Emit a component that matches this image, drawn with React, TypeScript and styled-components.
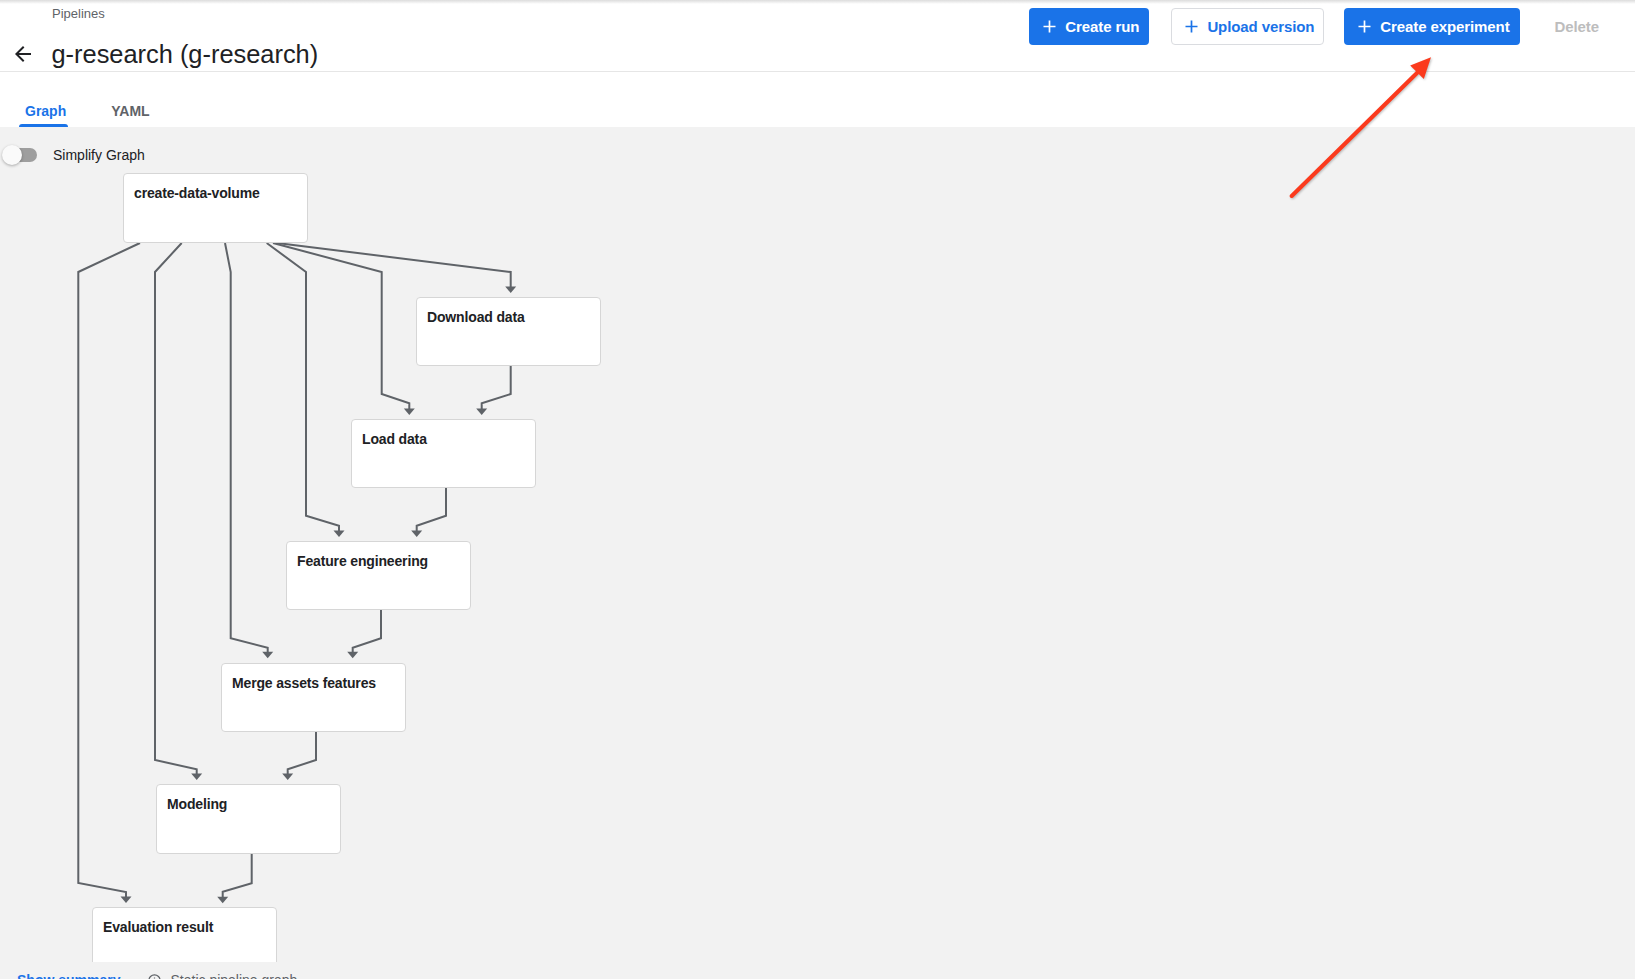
import React from 'react';
import styled, { createGlobalStyle } from 'styled-components';

const CANVAS_TOP = 127;

const GlobalStyle = createGlobalStyle`
  html, body { margin: 0; padding: 0; background: #fff; overflow: hidden; }
  * { box-sizing: border-box; }
  body { font-family: "Liberation Sans", Arial, Helvetica, sans-serif; }
`;

const Page = styled.div`
  position: relative;
  width: 100%;
  height: 100vh;
  overflow: hidden;
  display: flex;
  flex-direction: column;
`;

const Header = styled.header`
  flex: none;
  height: 72px;
  border-bottom: 1px solid #e6e6e6;
  background: linear-gradient(#dcdcdc 0px, #ffffff 4px);
  display: flex;
  justify-content: space-between;
  align-items: flex-start;
`;

const TitleBlock = styled.div`
  padding: 6px 0 0 11px;
`;

const Breadcrumb = styled.div`
  padding-left: 41px;
  font-size: 13px;
  line-height: 15px;
  color: #5f6368;
`;

const TitleRow = styled.div`
  margin-top: 18px;
  height: 30px;
  display: flex;
  align-items: center;
  gap: 16.5px;
`;

const Title = styled.h1`
  margin: 0;
  font-size: 25.4px;
  font-weight: 400;
  line-height: 30px;
  color: #202124;
`;

const Actions = styled.div`
  display: flex;
  align-items: center;
  gap: 20px;
  padding: 8px 21px 0 0;
`;

const Button = styled.button<{ $variant: 'primary' | 'outline' | 'text' }>`
  height: 37px;
  display: inline-flex;
  align-items: center;
  gap: 9px;
  padding: ${p => (p.$variant === 'text' ? '0 14px' : '0 9px 0 13px')};
  border-radius: 4px;
  font-family: "Liberation Sans", Arial, sans-serif;
  font-size: 15px;
  font-weight: 700;
  letter-spacing: -0.1px;
  cursor: pointer;
  border: 1px solid ${p => (p.$variant === 'outline' ? '#dadce0' : 'transparent')};
  background: ${p => (p.$variant === 'primary' ? '#1a73e8' : 'transparent')};
  color: ${p => (p.$variant === 'primary' ? '#ffffff' : p.$variant === 'outline' ? '#1a73e8' : '#bdbdbd')};
  &:first-child {
    margin-right: 2px;
  }
`;

const TabBar = styled.div`
  flex: none;
  height: 55px;
  padding: 31px 0 0 19px;
  display: flex;
  gap: 37px;
  background: #fff;
`;

const Tab = styled.div<{ $active?: boolean }>`
  position: relative;
  height: 24px;
  padding: 0 2px 0 6px;
  font-size: 14px;
  font-weight: 700;
  line-height: 16px;
  color: ${p => (p.$active ? '#1a73e8' : '#5f6368')};
  &::after {
    content: '';
    display: ${p => (p.$active ? 'block' : 'none')};
    position: absolute;
    left: 0;
    right: 0;
    bottom: 0;
    height: 3px;
    border-radius: 3px 3px 0 0;
    background: #1a73e8;
  }
`;

const Main = styled.main`
  flex: 1;
  background: #f2f2f2;
  display: flex;
  flex-direction: column;
`;

const Canvas = styled.div`
  position: relative;
  flex: none;
  height: 835px;
  overflow: hidden;
`;

const ToggleRow = styled.div`
  position: relative;
  z-index: 2;
  display: flex;
  align-items: center;
  gap: 15px;
  padding-top: 18px;
  font-size: 14px;
  color: #202124;
`;

const Switch = styled.div`
  position: relative;
  width: 38px;
  height: 20px;
`;

const Track = styled.span`
  position: absolute;
  left: 3px;
  top: 3px;
  width: 34px;
  height: 14px;
  border-radius: 7px;
  background: #9e9e9e;
`;

const Thumb = styled.span`
  position: absolute;
  left: 2px;
  top: 0;
  width: 20px;
  height: 20px;
  border-radius: 50%;
  background: #fafafa;
  box-shadow: 0 1px 3px rgba(0, 0, 0, 0.3);
`;

const GraphLayer = styled.div`
  position: absolute;
  inset: 0;
`;

const EdgeSvg = styled.svg`
  position: absolute;
  left: 0;
  top: 0;
  width: 100%;
  height: 100%;
`;

const Node = styled.div<{ $x: number; $y: number; $h: number }>`
  position: absolute;
  left: ${p => p.$x}px;
  top: ${p => p.$y - CANVAS_TOP}px;
  width: 185px;
  height: ${p => p.$h}px;
  background: #fff;
  border: 1px solid #d6d6d6;
  border-radius: 4px;
  padding: 11px 10px;
  font-size: 14px;
  font-weight: 700;
  line-height: 16px;
  letter-spacing: -0.15px;
  color: #202124;
`;

const Footer = styled.div`
  display: flex;
  align-items: center;
  padding: 8px 0 0 17px;
  font-size: 14px;
  line-height: 20px;
`;

const SummaryLink = styled.span`
  color: #1a73e8;
  font-weight: 700;
`;

const StaticInfo = styled.span`
  display: inline-flex;
  align-items: center;
  gap: 9px;
  margin-left: 28px;
  color: #5f6368;
`;

const Annotation = styled.svg`
  position: absolute;
  left: 1280px;
  top: 48px;
  width: 160px;
  height: 160px;
  pointer-events: none;
  filter: drop-shadow(1px 1px 1px rgba(0, 0, 0, 0.25));
`;

const PlusIcon = () => (
  <svg width="13" height="13" viewBox="0 0 13 13">
    <path d="M6.5 0.5v12M0.5 6.5h12" stroke="currentColor" strokeWidth="1.7" fill="none" />
  </svg>
);

const BackIcon = () => (
  <svg width="24" height="24" viewBox="0 0 24 24">
    <path d="M20 11H7.83l5.59-5.59L12 4l-8 8 8 8 1.41-1.41L7.83 13H20v-2z" fill="#202124" />
  </svg>
);

const InfoIcon = () => (
  <svg width="13" height="13" viewBox="0 0 13 13">
    <circle cx="6.5" cy="6.5" r="5.6" stroke="#5f6368" strokeWidth="1.2" fill="none" />
    <path d="M6.5 5.8v3.6M6.5 3.6v0.9" stroke="#5f6368" strokeWidth="1.2" />
  </svg>
);

type Pt = [number, number];

const nodes = [
  { label: 'create-data-volume', x: 123, y: 173, h: 70 },
  { label: 'Download data', x: 416, y: 297, h: 69 },
  { label: 'Load data', x: 351, y: 419, h: 69 },
  { label: 'Feature engineering', x: 286, y: 541, h: 69 },
  { label: 'Merge assets features', x: 221, y: 663, h: 69 },
  { label: 'Modeling', x: 156, y: 784, h: 70 },
  { label: 'Evaluation result', x: 92, y: 907, h: 69 },
];

const edges: Pt[][] = [
  [[140, 243], [78.3, 272], [78.3, 883], [126, 892], [126, 903]],
  [[181.7, 243], [155, 272], [155, 760], [196.7, 769.3], [196.7, 780]],
  [[225, 243], [230.7, 272], [230.7, 638.3], [267.7, 647.7], [267.7, 658.3]],
  [[266.7, 243], [306, 272], [306, 515.7], [339, 525.7], [339, 537]],
  [[273, 243], [381.7, 272], [381.7, 394], [409.3, 403.3], [409.3, 415]],
  [[277, 243], [510.7, 272], [510.7, 293]],
  [[510.7, 366], [510.7, 394], [481.7, 403.3], [481.7, 415]],
  [[446, 488], [446, 515.7], [416.7, 525.7], [416.7, 537]],
  [[381, 610], [381, 638.3], [352.7, 647.7], [352.7, 658.3]],
  [[316, 732], [316, 760], [287.7, 769.3], [287.7, 780]],
  [[251.7, 854], [251.7, 883.3], [222.7, 891.7], [222.7, 903.3]],
];

const Edge = ({ pts }: { pts: Pt[] }) => {
  const tip = pts[pts.length - 1];
  const line = pts.slice(0, -1).concat([[tip[0], tip[1] - 5.5]]);
  return (
    <g>
      <polyline
        points={line.map(p => p.join(',')).join(' ')}
        fill="none"
        stroke="#5f6368"
        strokeWidth="2"
        strokeLinejoin="miter"
      />
      <polygon
        points={`${tip[0] - 5.5},${tip[1] - 6.5} ${tip[0] + 5.5},${tip[1] - 6.5} ${tip[0]},${tip[1]}`}
        fill="#5f6368"
      />
    </g>
  );
};

export default function App() {
  return (
    <Page>
      <GlobalStyle />
      <Header>
        <TitleBlock>
          <Breadcrumb>Pipelines</Breadcrumb>
          <TitleRow>
            <BackIcon />
            <Title>g-research (g-research)</Title>
          </TitleRow>
        </TitleBlock>
        <Actions>
          <Button $variant="primary">
            <PlusIcon />
            Create run
          </Button>
          <Button $variant="outline">
            <PlusIcon />
            Upload version
          </Button>
          <Button $variant="primary">
            <PlusIcon />
            Create experiment
          </Button>
          <Button $variant="text">Delete</Button>
        </Actions>
      </Header>
      <TabBar>
        <Tab $active>Graph</Tab>
        <Tab>YAML</Tab>
      </TabBar>
      <Main>
        <Canvas>
          <GraphLayer>
            <EdgeSvg>
              <g transform={`translate(0,${-CANVAS_TOP})`}>
                {edges.map((e, i) => (
                  <Edge key={i} pts={e} />
                ))}
              </g>
            </EdgeSvg>
            {nodes.map(n => (
              <Node key={n.label} $x={n.x} $y={n.y} $h={n.h}>
                {n.label}
              </Node>
            ))}
          </GraphLayer>
          <ToggleRow>
            <Switch>
              <Track />
              <Thumb />
            </Switch>
            Simplify Graph
          </ToggleRow>
        </Canvas>
        <Footer>
          <SummaryLink>Show summary</SummaryLink>
          <StaticInfo>
            <InfoIcon />
            Static pipeline graph
          </StaticInfo>
        </Footer>
      </Main>
      <Annotation viewBox="0 0 160 160">
        <line x1="11.7" y1="148" x2="139" y2="23" stroke="#fb3a1d" strokeWidth="4" strokeLinecap="round" />
        <polygon points="151,9.3 130.2,17.6 143.8,31" fill="#fb3a1d" />
      </Annotation>
    </Page>
  );
}
